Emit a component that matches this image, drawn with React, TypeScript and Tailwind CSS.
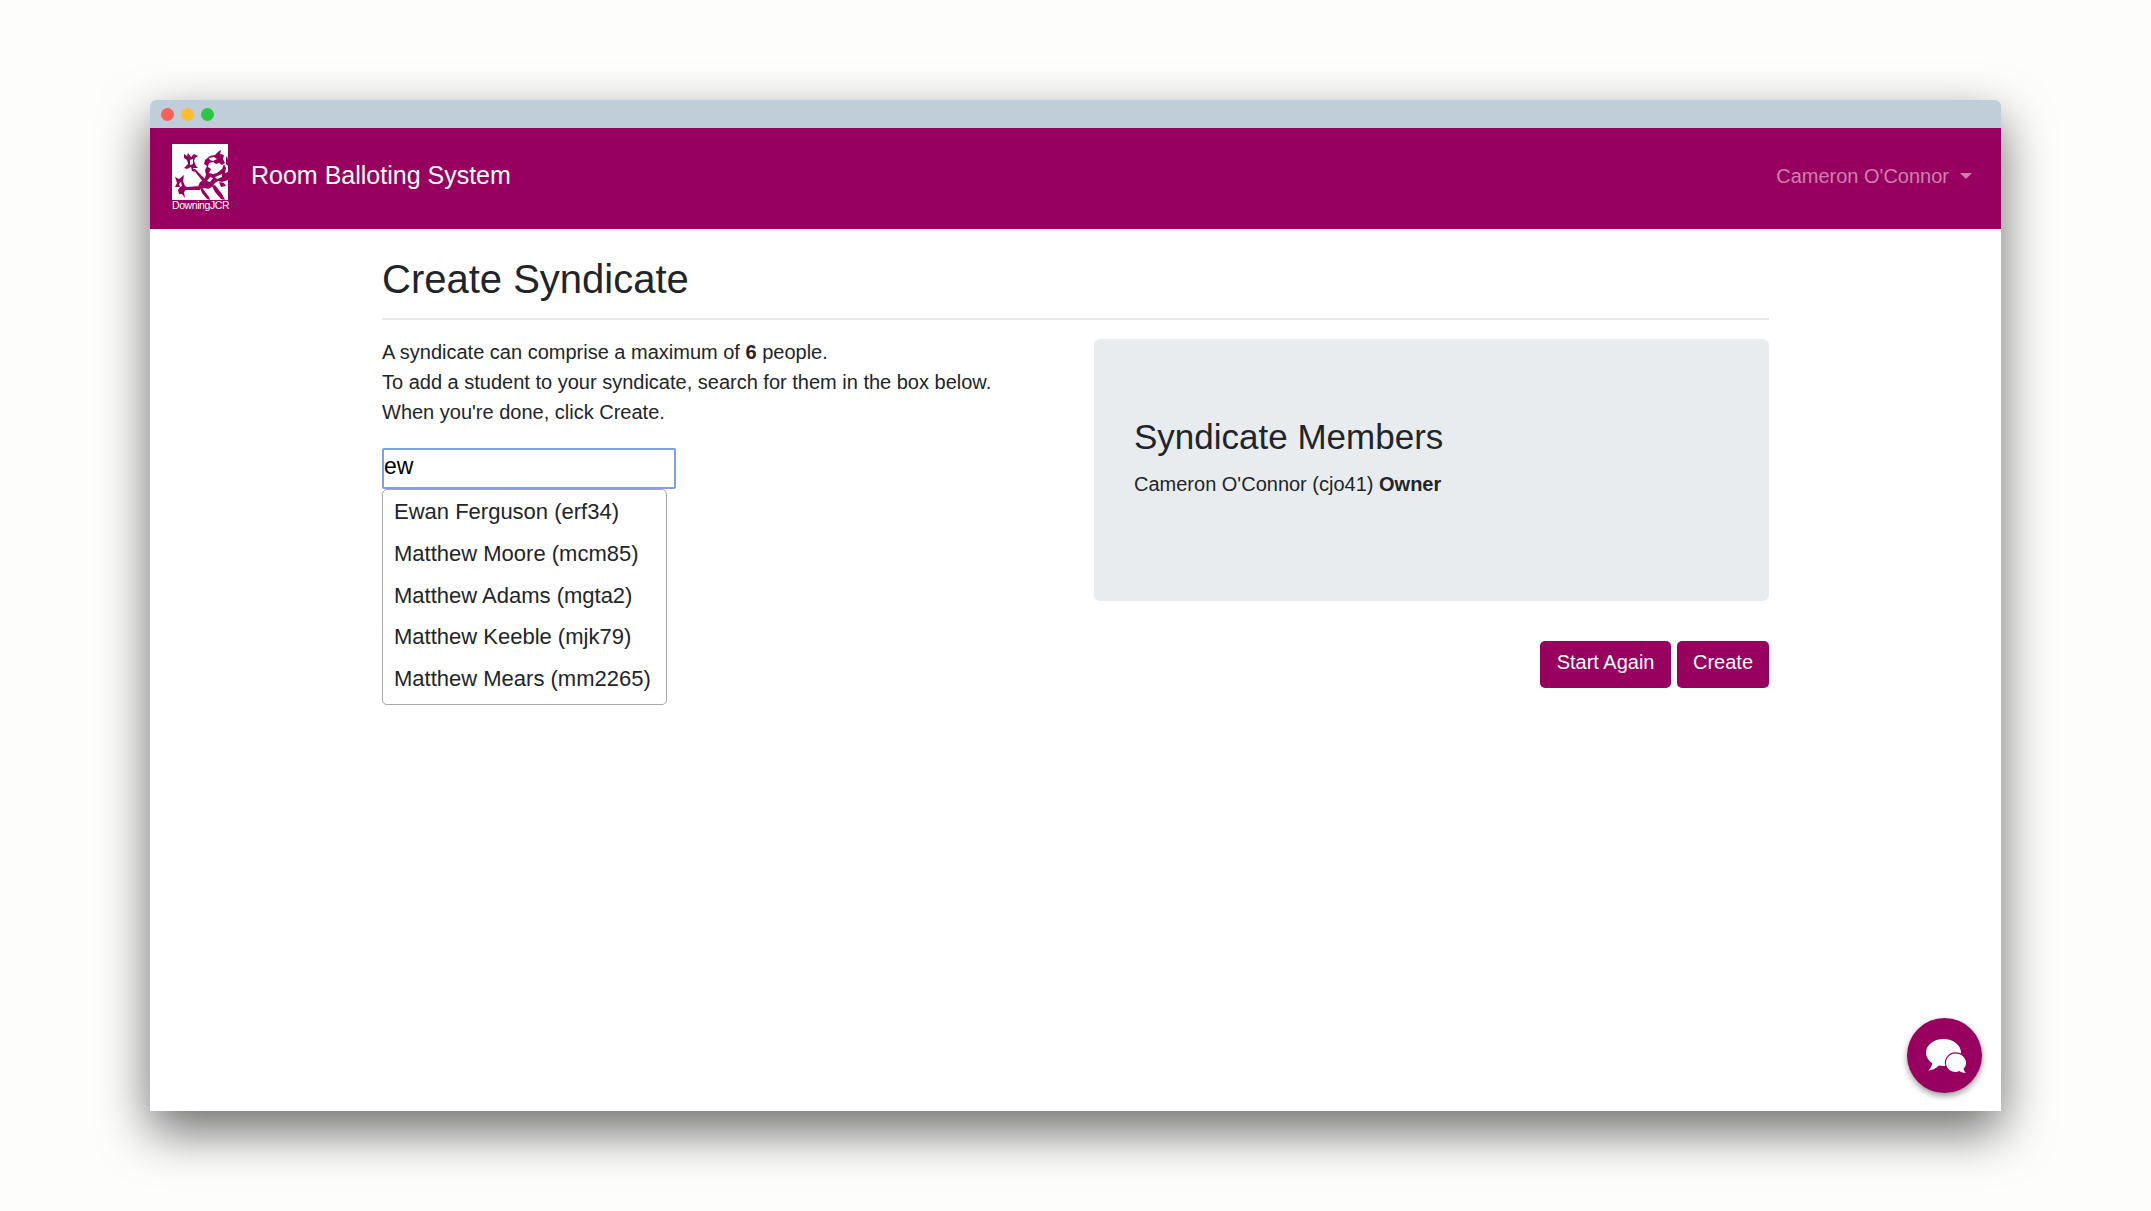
import React from "react";

const items = [
  "Ewan Ferguson (erf34)",
  "Matthew Moore (mcm85)",
  "Matthew Adams (mgta2)",
  "Matthew Keeble (mjk79)",
  "Matthew Mears (mm2265)",
];

function Griffin() {
  return (
    <svg viewBox="0 0 56 56" className="w-[56px] h-[56px] block">
      <rect width="56" height="56" fill="#ffffff" />
      <g fill="#98005f">
        <path d="M33 16 L38 12 L43 11 L47 7 L49 6 L48 10 L52 11 L51 15 L53 19 L50 21 L47 19 L44 20 L41 18 L37 19 L36 23 L39 25 L37 29 L41 30 L45 29 L50 25 L52 20 L54 24 L53 29 L56 28 L56 36 L50 38 L46 37 L43 39 L40 43 L36 45 L33 44 L29 45 L26 43 L28 38 L32 36 L34 31 L33 26 L35 22 L32 20 Z" />
        <path d="M12 10 L15 12 L16 9 L19 13 L22 10 L26 12 L23 14 L22 17 L24 22 L26 24 L21 24 L23 28 L20 27 L19 23 L15 25 L12 24 L16 20 L15 16 L12 14 Z" />
        <path d="M21 25 L23 25 L34 36 L32 39 Z" />
        <path d="M3 33 L7 35 L12 31 L11 37 L13 42 L15 43 L28 42 L28 46 L14 46 L12 48 L13 54 L10 50 L7 50 L6 46 L8 43 L3 43 L5 39 Z" />
        <path d="M28 44 L31 45 L37 53 L38 56 L35 55 L30 49 Z" />
        <path d="M40 42 L43 41 L50 50 L53 56 L49 55 L43 48 Z" />
        <path d="M47 38 L52 39 L54 42 L49 43 Z" />
        <path d="M54 14 L55 12 L56 16 L56 22 L54 20 Z" />
      </g>
      <g fill="#ffffff">
        <path d="M37 14 L42 13 L45 15 L41 17 L38 16 Z" />
        <path d="M18 16 L21 15 L21 20 L18 21 Z" />
        <path d="M38 33 L41 34 L38 38 L35 37 Z" />
        <path d="M43 33 L50 30 L50 33 L45 35 Z" />
        <path d="M7 40 L9 38 L10 42 L8 43 Z" />
      </g>
    </svg>
  );
}

function ChatIcon() {
  return (
    <svg viewBox="0 0 40 34" className="w-[40px] h-[34px] block">
      <path
        fill="#ffffff"
        d="M17.5 0 C27.2 0 35 6 35 13.5 C35 21 27.2 27 17.5 27 C15.8 27 14.2 26.8 12.8 26.5 C10 29.5 6.5 31.2 2 31.5 C4.5 29.5 6 27 6.2 24.2 C2.4 21.7 0 17.8 0 13.5 C0 6 7.8 0 17.5 0 Z"
      />
      <path
        fill="#ffffff"
        stroke="#98005f"
        strokeWidth="2.4"
        paintOrder="stroke"
        d="M29.5 14.5 C35.3 14.5 40 18.7 40 24 C40 26.2 39.2 28 37.6 29.6 C37.8 31.2 38.6 32.8 40 34 C37.5 34 35 33.2 33.2 32 C32 32.6 30.8 33 29.5 33 C24.2 33 20 28.8 20 24 C20 18.7 24.2 14.5 29.5 14.5 Z"
      />
    </svg>
  );
}

export default function App() {
  return (
    <div className="min-h-[1211px] bg-[#fdfefc] pt-[100px] pl-[150px] font-['Liberation_Sans',Arial,sans-serif] text-[#212529]">
      <div className="relative w-[1851px] h-[1011px] bg-white rounded-t-[6px] shadow-[0_20px_50px_rgba(0,0,0,0.58)]">
        <div className="h-[28px] bg-[#bfced9] rounded-t-[6px] flex items-center gap-[7px] pl-[10.5px]">
          <span className="w-[13px] h-[13px] rounded-full bg-[#ff5f57]" />
          <span className="w-[13px] h-[13px] rounded-full bg-[#ffbd2e]" />
          <span className="w-[13px] h-[13px] rounded-full bg-[#28c940]" />
        </div>
        <nav className="h-[101px] bg-[#98005f] flex items-start pl-[22px] pr-[29px]">
          <div className="pt-[16px] w-[56px] shrink-0">
            <Griffin />
            <div className="text-[10.5px] leading-[11px] text-white tracking-[-0.42px] whitespace-nowrap">DowningJCR</div>
          </div>
          <div className="ml-[23px] mt-[29px] text-[25px] leading-[37px] text-white">Room Balloting System</div>
          <div className="ml-auto mt-[33px] flex items-center text-[20px] leading-[30px] text-[#cc80af]">
            <span>Cameron O'Connor</span>
            <span className="ml-[11px] w-0 h-0 border-x-[6px] border-x-transparent border-t-[6px] border-t-[#cc80af]" />
          </div>
        </nav>
        <main className="w-[1387px] ml-[232px]">
          <h1 className="pt-[26px] pb-[15px] text-[40px] leading-[48px] font-normal border-b-2 border-[#e6e7eb]">Create Syndicate</h1>
          <div className="flex mt-[19px]">
            <div className="w-[712px] shrink-0">
              <p className="-mt-[2px] text-[20px] leading-[30px]">A syndicate can comprise a maximum of <b>6</b> people.</p>
              <p className="text-[20px] leading-[30px]">To add a student to your syndicate, search for them in the box below.</p>
              <p className="text-[20px] leading-[30px]">When you're done, click Create.</p>
              <div className="mt-[21px] w-[294px] h-[41px] border-2 border-[#7f9fe8] rounded-[2px] text-[23px] leading-[33px] text-black">ew</div>
              <ul className="w-[285px] h-[216px] border border-[#a8a8a8] rounded-[5px] pt-[1px] pl-[11px] text-[22px] leading-[41.8px] whitespace-nowrap">
                {items.map((t) => (
                  <li key={t}>{t}</li>
                ))}
              </ul>
            </div>
            <div className="flex-1">
              <div className="h-[262px] bg-[#e9ecef] rounded-[6px] pl-[40px] pt-[77px]">
                <h2 className="text-[35px] leading-[42px] font-normal">Syndicate Members</h2>
                <p className="mt-[11px] text-[20px] leading-[30px]">Cameron O'Connor (cjo41) <b>Owner</b></p>
              </div>
              <div className="flex justify-end gap-[6px] mt-[40px]">
                <button className="h-[47px] px-[16.5px] bg-[#98005f] rounded-[5px] text-white text-[20px] leading-[43px] pb-[4px]">Start Again</button>
                <button className="h-[47px] px-[16px] bg-[#98005f] rounded-[5px] text-white text-[20px] leading-[43px] pb-[4px]">Create</button>
              </div>
            </div>
          </div>
        </main>
        <div className="absolute left-[1757px] top-[918px] w-[75px] h-[75px] rounded-full bg-[#98005f] shadow-[0_3px_6px_rgba(0,0,0,0.4)] flex items-center justify-center pl-[2px] pt-[1px]">
          <ChatIcon />
        </div>
      </div>
    </div>
  );
}
